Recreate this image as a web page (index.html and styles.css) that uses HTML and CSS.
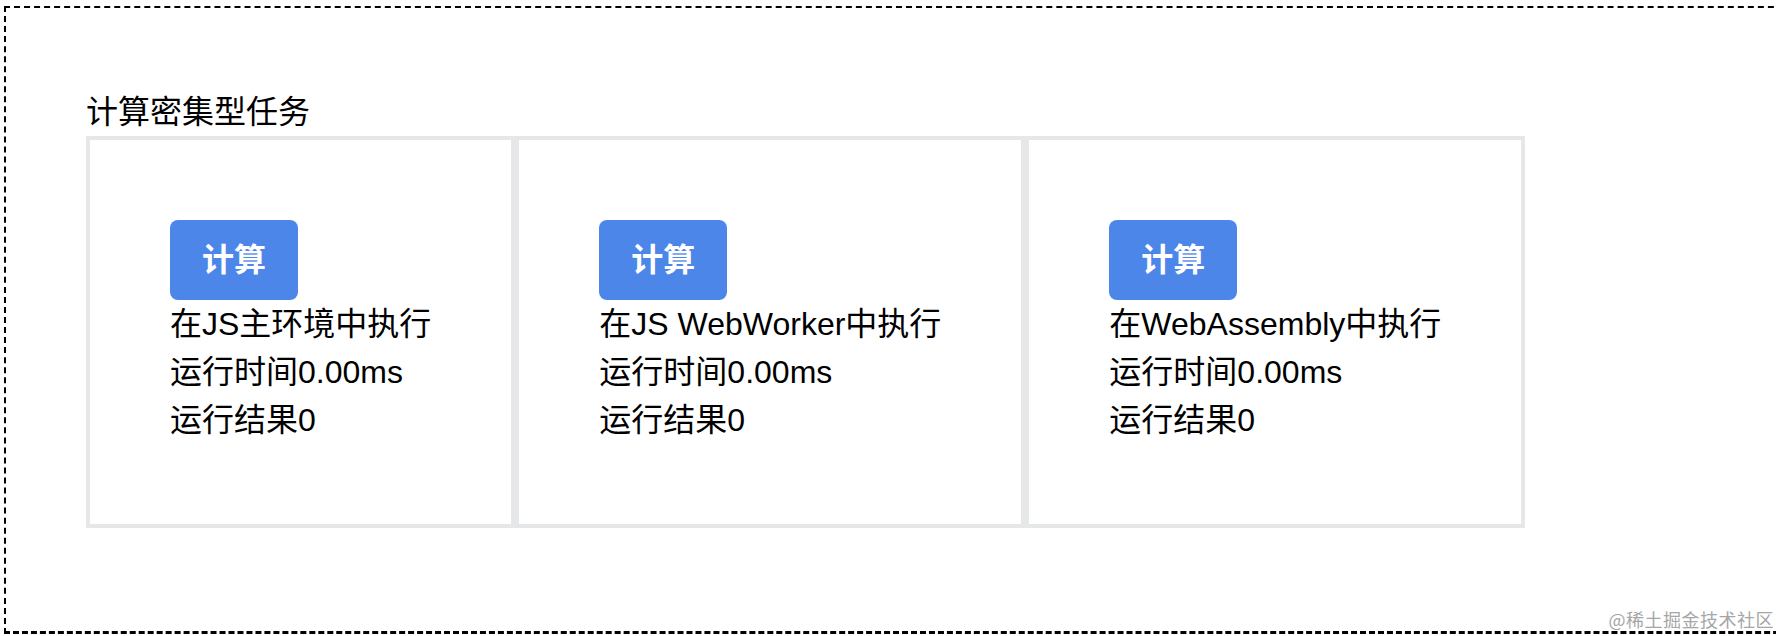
FILE: index.html
```html
<!DOCTYPE html>
<html lang="zh-CN">
<head>
<meta charset="utf-8">
<title>计算密集型任务</title>
<link rel="stylesheet" href="styles.css">
</head>
<body>
<div class="frame">
  <div class="section-title">计算密集型任务</div>
  <div class="cards">
    <div class="card">
      <button class="btn">计算</button>
      <div class="line">在JS主环境中执行</div>
      <div class="line">运行时间0.00ms</div>
      <div class="line">运行结果0</div>
    </div>
    <div class="card">
      <button class="btn">计算</button>
      <div class="line">在JS WebWorker中执行</div>
      <div class="line">运行时间0.00ms</div>
      <div class="line">运行结果0</div>
    </div>
    <div class="card">
      <button class="btn">计算</button>
      <div class="line">在WebAssembly中执行</div>
      <div class="line">运行时间0.00ms</div>
      <div class="line">运行结果0</div>
    </div>
  </div>
</div>
<div class="watermark">@稀土掘金技术社区</div>
</body>
</html>
```

FILE: styles.css
```css
html, body {
  margin: 0;
  padding: 0;
  background: #ffffff;
  overflow: hidden;
}

body {
  width: 1776px;
  height: 636px;
  position: relative;
  font-family: "Liberation Sans", "Noto Sans CJK SC", sans-serif;
  font-size: 32px;
  line-height: 48px;
  color: #000000;
}

.frame {
  margin: 6px 0 0 4px;
  width: 1820px;
  height: 628px;
  box-sizing: border-box;
  border: 2px dashed #000000;
  border-bottom: 3px dashed #000000;
  border-right: none;
  padding: 80px 0 0 80px;
}

.section-title {
  height: 48px;
}

.cards {
  display: flex;
  align-items: stretch;
}

.card {
  border: 4px solid #e6e7e9;
  padding: 80px;
  background: #ffffff;
}

.btn {
  display: block;
  border: none;
  border-radius: 8px;
  background: #4d86e9;
  color: #ffffff;
  font-family: "Liberation Sans", "Noto Sans CJK SC", sans-serif;
  font-size: 32px;
  font-weight: 700;
  line-height: 48px;
  padding: 16px 32px;
  margin: 0;
  cursor: pointer;
}

.line {
  white-space: nowrap;
}

.watermark {
  position: absolute;
  right: 2px;
  bottom: 8px;
  font-family: "Noto Sans CJK SC", sans-serif;
  font-size: 18px;
  line-height: 18px;
  color: #a6a6a6;
  letter-spacing: 0.5px;
}
```
